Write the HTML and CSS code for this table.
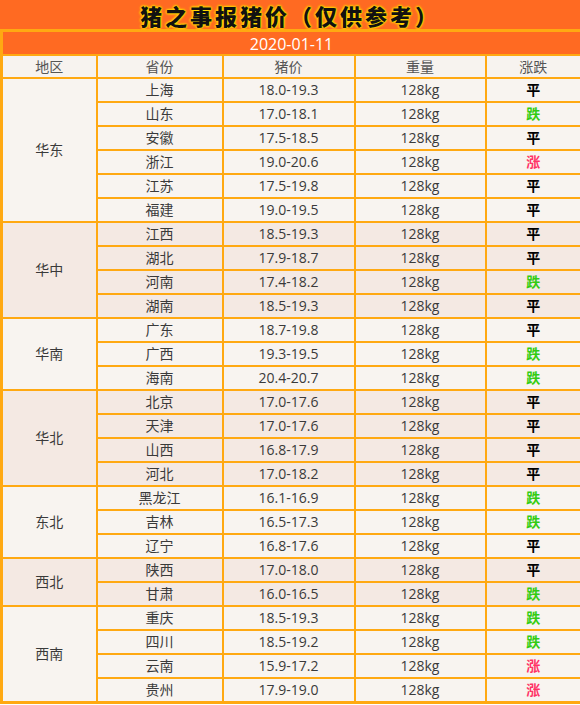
FILE: index.html
```html
<!DOCTYPE html>
<html lang="zh">
<head>
<meta charset="utf-8">
<link rel="stylesheet" href="styles.css">
</head>
<body>
<div class="page">
  <div class="title"><span class="title-text">猪之事报猪价（仅供参考）</span></div>
  <table class="price">
    <colgroup>
      <col class="c1"><col class="c2"><col class="c3"><col class="c4"><col class="c5">
    </colgroup>
    <tr class="date"><td colspan="5">2020-01-11</td></tr>
    <tr class="head"><td>地区</td><td>省份</td><td>猪价</td><td>重量</td><td>涨跌</td></tr>

    <tr class="g1"><td rowspan="6">华东</td><td>上海</td><td>18.0-19.3</td><td>128kg</td><td class="flat">平</td></tr>
    <tr class="g1"><td>山东</td><td>17.0-18.1</td><td>128kg</td><td class="down">跌</td></tr>
    <tr class="g1"><td>安徽</td><td>17.5-18.5</td><td>128kg</td><td class="flat">平</td></tr>
    <tr class="g1"><td>浙江</td><td>19.0-20.6</td><td>128kg</td><td class="up">涨</td></tr>
    <tr class="g1"><td>江苏</td><td>17.5-19.8</td><td>128kg</td><td class="flat">平</td></tr>
    <tr class="g1"><td>福建</td><td>19.0-19.5</td><td>128kg</td><td class="flat">平</td></tr>

    <tr class="g2"><td rowspan="4">华中</td><td>江西</td><td>18.5-19.3</td><td>128kg</td><td class="flat">平</td></tr>
    <tr class="g2"><td>湖北</td><td>17.9-18.7</td><td>128kg</td><td class="flat">平</td></tr>
    <tr class="g2"><td>河南</td><td>17.4-18.2</td><td>128kg</td><td class="down">跌</td></tr>
    <tr class="g2"><td>湖南</td><td>18.5-19.3</td><td>128kg</td><td class="flat">平</td></tr>

    <tr class="g1"><td rowspan="3">华南</td><td>广东</td><td>18.7-19.8</td><td>128kg</td><td class="flat">平</td></tr>
    <tr class="g1"><td>广西</td><td>19.3-19.5</td><td>128kg</td><td class="down">跌</td></tr>
    <tr class="g1"><td>海南</td><td>20.4-20.7</td><td>128kg</td><td class="down">跌</td></tr>

    <tr class="g2"><td rowspan="4">华北</td><td>北京</td><td>17.0-17.6</td><td>128kg</td><td class="flat">平</td></tr>
    <tr class="g2"><td>天津</td><td>17.0-17.6</td><td>128kg</td><td class="flat">平</td></tr>
    <tr class="g2"><td>山西</td><td>16.8-17.9</td><td>128kg</td><td class="flat">平</td></tr>
    <tr class="g2"><td>河北</td><td>17.0-18.2</td><td>128kg</td><td class="flat">平</td></tr>

    <tr class="g1"><td rowspan="3">东北</td><td>黑龙江</td><td>16.1-16.9</td><td>128kg</td><td class="down">跌</td></tr>
    <tr class="g1"><td>吉林</td><td>16.5-17.3</td><td>128kg</td><td class="down">跌</td></tr>
    <tr class="g1"><td>辽宁</td><td>16.8-17.6</td><td>128kg</td><td class="flat">平</td></tr>

    <tr class="g2"><td rowspan="2">西北</td><td>陕西</td><td>17.0-18.0</td><td>128kg</td><td class="flat">平</td></tr>
    <tr class="g2"><td>甘肃</td><td>16.0-16.5</td><td>128kg</td><td class="down">跌</td></tr>

    <tr class="g1"><td rowspan="4">西南</td><td>重庆</td><td>18.5-19.3</td><td>128kg</td><td class="down">跌</td></tr>
    <tr class="g1"><td>四川</td><td>18.5-19.2</td><td>128kg</td><td class="down">跌</td></tr>
    <tr class="g1"><td>云南</td><td>15.9-17.2</td><td>128kg</td><td class="up">涨</td></tr>
    <tr class="g1"><td>贵州</td><td>17.9-19.0</td><td>128kg</td><td class="up">涨</td></tr>
  </table>
</div>
</body>
</html>
```

FILE: styles.css
```css
html, body {
  margin: 0;
  padding: 0;
  background: #ffffff;
}

.page {
  width: 580px;
  font-family: "Open Sans", "Noto Sans CJK SC", sans-serif;
}

.title {
  height: 29px;
  background: #ff6a22;
  display: flex;
  align-items: center;
  justify-content: center;
}

.title-text {
  color: #111;
  font-family: "Noto Sans CJK SC", sans-serif;
  font-weight: 900;
  font-size: 22px;
  letter-spacing: 3px;
  line-height: 1;
  text-shadow: 0 0 2px #ffe000, 0 0 2px #ffe000, 0 0 3px #ffd000, 0 0 3px #ffd000;
}

.price {
  width: 580px;
  table-layout: fixed;
  border-collapse: collapse;
  border: 3px solid #ffa912;
  font-size: 14px;
  color: #3a3a3a;
}

.c1 { width: 95px; }
.c2 { width: 126px; }
.c3 { width: 132px; }
.c4 { width: 131px; }
.c5 { width: 96px; }

.price td {
  border: 2px solid #ffa912;
  height: 22px;
  padding: 0;
  text-align: center;
  vertical-align: middle;
  line-height: 20px;
}

.date td {
  background: #ff6a22;
  color: #ffffff;
  font-size: 16px;
  height: 21px;
  padding-top: 1px;
}

.head td {
  background: #f7f3ef;
  color: #555;
  height: 21px;
}

.g1 td { background: #f8f4f0; }
.g2 td { background: #f4e9e3; }

.price td.flat { color: #000; font-weight: 700; }
.price td.down { color: #33cc11; font-weight: 700; }
.price td.up { color: #ff3366; font-weight: 700; }
```
